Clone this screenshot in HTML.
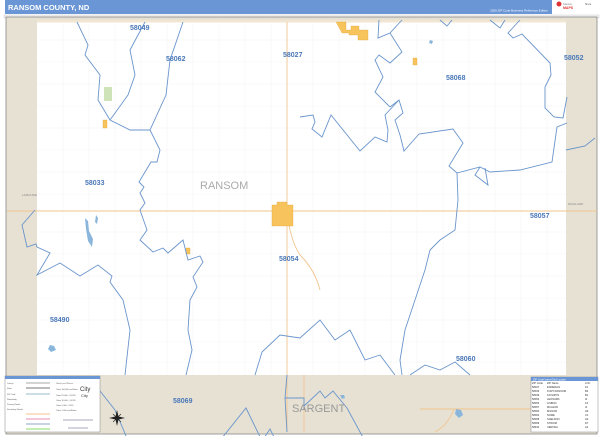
<!DOCTYPE html>
<html><head><meta charset="utf-8"><style>
html,body{margin:0;padding:0;background:#fff;width:600px;height:436px;overflow:hidden}
svg{display:block;font-family:"Liberation Sans",sans-serif}
</style></head><body>
<svg width="600" height="436" viewBox="0 0 600 436" xmlns="http://www.w3.org/2000/svg">
<rect x="5" y="0" width="547" height="14" fill="#6a96d6"/>
<text x="8" y="10" font-size="7.5" font-weight="bold" fill="#fff">RANSOM COUNTY, ND</text>
<text x="548" y="11.5" font-size="3" fill="#fff" text-anchor="end">2020 ZIP Code Business Reference Edition</text>
<rect x="553" y="0" width="47" height="14" fill="#fff"/>
<circle cx="559" cy="4" r="2.5" fill="#d33"/>
<text x="563" y="5" font-size="3" fill="#888">Market</text>
<text x="563" y="9" font-size="3.5" font-weight="bold" fill="#d33">MAPS</text>
<text x="585" y="5" font-size="2.5" fill="#555">Since</text>
<rect x="4" y="15" width="595" height="3" fill="#f4f4f4" stroke="#ccc" stroke-width="0.5"/>
<rect x="6" y="17" width="591" height="417" fill="#e6e1d3" stroke="#888" stroke-width="0.8"/>
<rect x="37" y="22" width="529" height="353" fill="#fff"/>
<rect x="37" y="20" width="529" height="2.5" fill="#f0e6d2"/>
<g stroke="#eeeeee" stroke-width="0.4">
<path d="M63 22V375M89 22V375M115 22V375M141 22V375M167 22V375M193 22V375M219 22V375M245 22V375M271 22V375M313 22V375M339 22V375M365 22V375M391 22V375M417 22V375M443 22V375M469 22V375M495 22V375M521 22V375M547 22V375"/>
<path d="M37 40H566M37 62H566M37 84H566M37 106H566M37 128H566M37 150H566M37 172H566M37 194H566M37 232H566M37 254H566M37 276H566M37 298H566M37 320H566M37 342H566M37 362H566"/>
</g>
<g stroke="#f2c58e" stroke-width="0.9" fill="none">
<path d="M37 211H566M287 22V375M287 211Q290 240 300 255Q315 270 320 290"/>
<path d="M7 211H37M566 211H597M304 375V432M287 375V432M420 409H531M454 409Q448 425 435 432"/>
</g>
<text x="22" y="196" font-size="3" fill="#888">LAMOURE</text>
<text x="568" y="205" font-size="3" fill="#888">RICHLAND</text>
<g fill="#f7c35c" stroke="#e0a030" stroke-width="0.3">
<path d="M336 22h10v8h5v-4h8v4h9v10h-10v-5h-9v-2h-7z"/>
<path d="M272 205h5v-3h10v3h6v21h-21z"/>
<path d="M413 58h4v7h-4z"/><path d="M186 248h4v6h-4z"/><path d="M103 120h4v8h-4z"/>
</g>
<path d="M104 87h8v14h-8z" fill="#cfe3b8"/>
<g fill="#8ab6dc">
<path d="M85 218l3 3 1 10 4 8-1 8-4-6-2-12z"/><path d="M96 215l2 3-1 6-2-2z"/>
<path d="M430 40l3 1-1 3-3-1z"/><path d="M50 345l4 1 2 4-5 2-3-3z"/>
<path d="M456 409l5 1 2 5-4 3-4-4z"/><path d="M340 395l4 0 1 3-3 1z"/>
</g>
<g stroke="#6a95cc" stroke-width="0.9" fill="none">
<path d="M77 22L88 45 85 55 100 75 98 100 110 120 130 130 150 130 160 150 157 162 151 162 139 182 144 187 140 193 145 203 140 210 147 230 140 240 153 252 163 248 168 253 183 240 188 260 200 256 203 262 193 277 197 287 190 300 188 330 192 350 186 375"/>
<path d="M145 22L130 50 135 75 128 95 110 120"/>
<path d="M183 22L170 60 166 95 150 130"/>
<path d="M35 210L22 225 27 247 36 244 37 247 50 253 37 275 60 263 80 276 98 265 112 276 110 282 123 300 130 330 125 375"/>
<path d="M379 20L378 38 390 33 402 20"/>
<path d="M390 33L402 52 390 63 379 55 375 60 383 77 375 92 390 107"/>
<path d="M300 117L313 115 315 122 312 129 322 137 331 115 360 151 375 137 387 142 388 130 385 115 399 100 403 113 395 120 400 135 404 151 419 134 453 129 463 143 449 166 457 173 480 167 490 172 520 170 552 162 557 127 567 123"/>
<path d="M390 107L399 100"/>
<path d="M457 173L458 200 455 230 440 240 430 250 425 270 415 300 405 330 400 360 402 375"/>
<path d="M480 167L475 175 488 185 485 168"/>
<path d="M567 97L563 118 554 117 545 108 545 87 551 75 550 63 522 34 513 38 508 33 520 20"/>
<path d="M566 150L585 146 595 138"/>
<path d="M440 20L447 26 452 20M490 20L500 28 505 20"/>
<path d="M255 375L262 352 280 335 300 338 320 320 335 340 350 330 365 360 380 355 395 375"/>
<path d="M287 375L285 398 287 432M285 398H304V410M304 406L320 391 325 398 333 391 347 408 366 443"/>
<path d="M218 443L246 408 262 441 270 429 277 443"/>
<path d="M100 391L115 410 129 443"/>
<path d="M410 375L425 365 440 370 455 362 470 375"/>
</g>
<g fill="#4a78b8" font-size="7" font-weight="bold">
<text x="130" y="30">58049</text><text x="166" y="61">58062</text><text x="283" y="57">58027</text>
<text x="446" y="80">58068</text><text x="564" y="60">58052</text><text x="85" y="185">58033</text>
<text x="530" y="218">58057</text><text x="279" y="261">58054</text><text x="50" y="322">58490</text>
<text x="456" y="361">58060</text><text x="173" y="403">58069</text>
</g>
<text x="200" y="189" font-size="11" fill="#aaa">RANSOM</text>
<text x="292" y="412" font-size="11" fill="#999">SARGENT</text>
<rect x="5" y="376" width="95" height="56" fill="#fff" stroke="#888" stroke-width="0.5"/>
<rect x="5" y="376" width="95" height="3" fill="#6a96d6"/>
<g stroke="#aaa" stroke-width="1"><path d="M26 383H50"/><path d="M26 388H50" stroke="#777"/><path d="M26 394H50" stroke="#9bc"/><path d="M26 414H50" stroke="#f5c08a"/><path d="M26 419H50" stroke="#e88cb0"/><path d="M26 424H50" stroke="#8ac"/><path d="M26 429H50" stroke="#8d6"/></g>
<g font-size="2" fill="#555"><text x="7" y="384">County</text><text x="7" y="389">State</text><text x="7" y="395">ZIP Code</text><text x="7" y="400">Waterbody</text><text x="7" y="405">Primary Roads</text><text x="7" y="410">Secondary Roads</text><text x="56" y="384">Other Local Places</text><text x="56" y="390">Cities 100,000 and More</text><text x="56" y="396">Cities 25,000 - 99,999</text><text x="56" y="401">Cities 10,000 - 24,999</text><text x="56" y="406">Cities 5,000 - 9,999</text><text x="56" y="411">Cities 1,000 and Below</text></g>
<text x="80" y="391" font-size="6" fill="#333">City</text><text x="81" y="397" font-size="4" fill="#333">City</text>
<path d="M63 420h30M68 428h20" stroke="#557" stroke-width="0.5"/>
<g transform="translate(117,418)"><path d="M0-8L1.5-1.5 8 0 1.5 1.5 0 8-1.5 1.5-8 0-1.5-1.5z" fill="#222"/><path d="M-4-4L4 4M4-4L-4 4" stroke="#222" stroke-width="0.6"/></g>
<rect x="531" y="377" width="67" height="55" fill="#fff" stroke="#888" stroke-width="0.5"/>
<rect x="531" y="377" width="67" height="4" fill="#6a96d6"/>
<text x="533" y="380.3" font-size="2.6" fill="#fff">ZIP Code Index/Grid Locator</text>
<g font-size="2.6" fill="#333">
<text x="532" y="384">ZIP Code</text><text x="547" y="384">ZIP Name</text><text x="585" y="384">LOC</text>
<text x="532" y="388">58027</text><text x="547" y="388">ENDERLIN</text><text x="585" y="388">F2</text>
<text x="532" y="392">58033</text><text x="547" y="392">FORT RANSOM</text><text x="585" y="392">B4</text>
<text x="532" y="396">58049</text><text x="547" y="396">KATHRYN</text><text x="585" y="396">B1</text>
<text x="532" y="400">58052</text><text x="547" y="400">LEONARD</text><text x="585" y="400">I2</text>
<text x="532" y="404">58054</text><text x="547" y="404">LISBON</text><text x="585" y="404">F4</text>
<text x="532" y="408">58057</text><text x="547" y="408">MCLEOD</text><text x="585" y="408">I4</text>
<text x="532" y="412">58060</text><text x="547" y="412">MILNOR</text><text x="585" y="412">H6</text>
<text x="532" y="416">58062</text><text x="547" y="416">NOME</text><text x="585" y="416">C1</text>
<text x="532" y="420">58068</text><text x="547" y="420">SHELDON</text><text x="585" y="420">H2</text>
<text x="532" y="424">58069</text><text x="547" y="424">STIRUM</text><text x="585" y="424">D7</text>
<text x="532" y="428">58490</text><text x="547" y="428">VERONA</text><text x="585" y="428">A4</text>
</g>
</svg>
</body></html>
